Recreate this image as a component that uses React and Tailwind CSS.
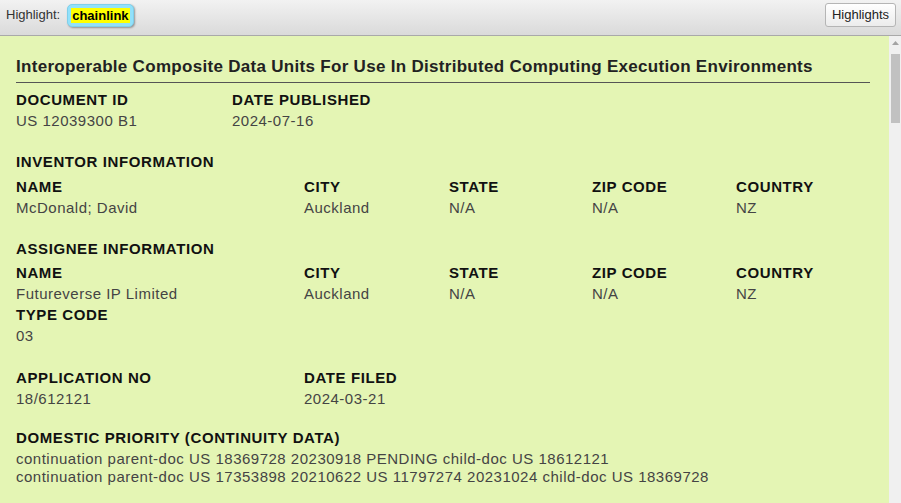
import React from 'react';

const font = { fontFamily: '"Liberation Sans", Arial, sans-serif' };

const Field = ({ label, value }) => (
  <div>
    <div className="font-bold text-[15px] leading-[21px] tracking-[0.6px] text-[#111]">{label}</div>
    <div className="text-[15px] leading-[21px] tracking-[0.5px] text-[#444]">{value}</div>
  </div>
);

const PersonGrid = ({ name, city, state, zip, country }) => (
  <div className="grid grid-cols-[288px_145px_143px_144px_1fr]">
    <Field label="NAME" value={name} />
    <Field label="CITY" value={city} />
    <Field label="STATE" value={state} />
    <Field label="ZIP CODE" value={zip} />
    <Field label="COUNTRY" value={country} />
  </div>
);

const SectionTitle = ({ children, className = '' }) => (
  <div className={`font-bold text-[15px] leading-[21px] tracking-[0.6px] text-[#111] ${className}`}>{children}</div>
);

export default function App() {
  return (
    <div className="w-[901px] h-[503px] flex flex-col overflow-hidden bg-[#f0f0f0]" style={font}>
      {/* Toolbar */}
      <div className="h-[36px] shrink-0 flex items-start justify-between pt-[3px] pl-[6px] pr-[5px] bg-gradient-to-b from-[#f2f2f2] to-[#dadada] border-b border-[#a9a9a9]">
        <div className="flex items-center h-[24px]">
          <span className="text-[13px] text-[#333] mr-[7px]">Highlight:</span>
          <span className="h-[23px] px-[3px] flex items-center rounded-[5px] bg-[#92e1fb] border border-[#7fd0ea] shadow-[1px_1px_2px_rgba(0,0,0,0.35)]">
            <span className="bg-[#ffff00] text-black font-bold text-[13px] leading-[15px] px-[1px]">chainlink</span>
          </span>
        </div>
        <button className="h-[24px] px-[6px] text-[13px] text-[#222] rounded-[3px] border border-[#b5b5b5] bg-gradient-to-b from-[#ffffff] to-[#ececec]">
          Highlights
        </button>
      </div>

      <div className="flex flex-1 min-h-0">
        {/* Document */}
        <div className="flex-1 bg-[#e4f5b4] pl-[16px] pr-[19px] pt-[20px]">
          <h1 className="font-bold text-[17px] leading-[22px] tracking-[0.3px] text-[#222] pb-[4px] border-b border-[#555]">
            Interoperable Composite Data Units For Use In Distributed Computing Execution Environments
          </h1>

          <div className="mt-[6px] grid grid-cols-[216px_1fr]">
            <Field label="DOCUMENT ID" value="US 12039300 B1" />
            <Field label="DATE PUBLISHED" value="2024-07-16" />
          </div>

          <SectionTitle className="mt-[20px] mb-[4px]">INVENTOR INFORMATION</SectionTitle>
          <PersonGrid name="McDonald; David" city="Auckland" state="N/A" zip="N/A" country="NZ" />

          <SectionTitle className="mt-[20px] mb-[3px]">ASSIGNEE INFORMATION</SectionTitle>
          <PersonGrid name="Futureverse IP Limited" city="Auckland" state="N/A" zip="N/A" country="NZ" />
          <Field label="TYPE CODE" value="03" />

          <div className="mt-[21px] grid grid-cols-[288px_1fr]">
            <Field label="APPLICATION NO" value="18/612121" />
            <Field label="DATE FILED" value="2024-03-21" />
          </div>

          <SectionTitle className="mt-[18px] mb-[2px]">DOMESTIC PRIORITY (CONTINUITY DATA)</SectionTitle>
          <div className="text-[15px] leading-[18px] tracking-[0.5px] text-[#444]">
            <div>continuation parent-doc US 18369728 20230918 PENDING child-doc US 18612121</div>
            <div>continuation parent-doc US 17353898 20210622 US 11797274 20231024 child-doc US 18369728</div>
          </div>
        </div>

        {/* Scrollbar */}
        <div className="w-[12px] shrink-0 bg-[#f0f0f0] flex flex-col items-center pt-[4px]">
          <svg width="9" height="6" viewBox="0 0 9 6" className="mb-[8px]">
            <path d="M4.5 1 L8 5 L1 5 Z" fill="#a3a3a3" />
          </svg>
          <div className="w-[9px] h-[69px] bg-[#c1c1c1]" />
        </div>
      </div>
    </div>
  );
}
